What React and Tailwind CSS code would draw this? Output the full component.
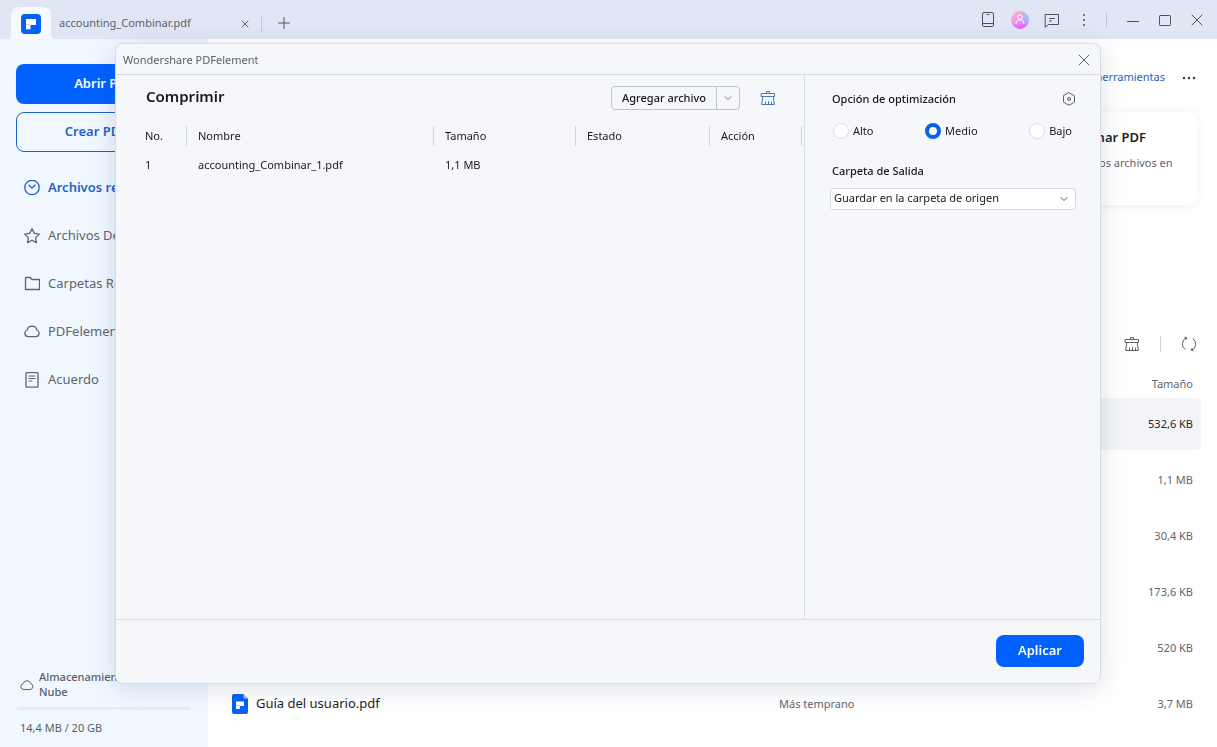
import { useState } from "react";

const navItems = [
  { label: "Archivos recientes", icon: ClockIcon, active: true },
  { label: "Archivos Destacados", icon: StarIcon },
  { label: "Carpetas Recientes", icon: FolderIcon },
  { label: "PDFelement Cloud", icon: CloudIcon },
  { label: "Acuerdo", icon: AgreementIcon },
];

const recentFiles = [
  { size: "532,6 KB", selected: true },
  { size: "1,1 MB" },
  { size: "30,4 KB" },
  { size: "173,6 KB" },
  { size: "520 KB" },
  { name: "Guía del usuario.pdf", date: "Más temprano", size: "3,7 MB" },
];

const compressFiles = [{ name: "accounting_Combinar_1.pdf", size: "1,1 MB" }];

const levels = ["Alto", "Medio", "Bajo"];

function Icon({ size = 16, width = 1, children }) {
  return (
    <svg
      width={size}
      height={size}
      viewBox={`0 0 ${size} ${size}`}
      fill="none"
      stroke="currentColor"
      strokeWidth={width}
      strokeLinecap="round"
      strokeLinejoin="round"
      className="shrink-0"
      aria-hidden="true"
    >
      {children}
    </svg>
  );
}

function ClockIcon() {
  return (
    <Icon width={1.3}>
      <circle cx="8" cy="7.5" r="7.2" />
      <path d="M5 5.2 8 8l3.2-2.9" />
    </Icon>
  );
}

function StarIcon() {
  return (
    <Icon width={1.3}>
      <path d="m8 .7 2.300 4.700 5 .7-3.700 3.500.9 5L8 12.200l-4.500 2.400.9-5L.7 6.100l5-.7z" />
    </Icon>
  );
}

function FolderIcon() {
  return (
    <Icon width={1.3}>
      <path d="M1.500 13.500v-12h4.700l1.800 2h7.500v10z" />
    </Icon>
  );
}

function CloudIcon() {
  return (
    <Icon width={1.3}>
      <path d="M4 12.600a3.400 3.400 0 0 1-.8-6.600 4.900 4.900 0 0 1 9.600 0 3.400 3.400 0 0 1-.8 6.600z" />
    </Icon>
  );
}

function AgreementIcon() {
  return (
    <Icon width={1.3}>
      <rect x="2" y=".7" width="12" height="14.5" rx="1" />
      <path d="M5 4h6M5 6.500h6M5 9h3" strokeWidth="1.1" />
    </Icon>
  );
}

function CloseIcon({ size = 12 }) {
  return (
    <Icon size={size}>
      <path d={`M1 1 ${size - 1} ${size - 1}M${size - 1} 1 1 ${size - 1}`} />
    </Icon>
  );
}

function BroomIcon() {
  return (
    <Icon>
      <path d="M6.500 3.500v-2h3v2M1.500 3.500h13v3h-13zM2.700 6.500l-1 8h12.600l-1-8M5.500 14.500v-2.500M8.500 14.500v-3M11.500 14.500v-2.500" />
    </Icon>
  );
}

function ChevronDown() {
  return (
    <Icon size={8}>
      <path d="m.8 2.500 3.200 3 3.200-3" />
    </Icon>
  );
}

function Logo() {
  return (
    <svg width="20" height="20" viewBox="0 0 20 20" aria-hidden="true">
      <rect width="20" height="20" rx="4" fill="#0561f5" />
      <path d="M5 5h10v6H5z" fill="#fff" />
      <path d="M5 11h4.500v4.300H5z" fill="#fff" />
      <path d="M5 10.300h4.500v.9H5z" fill="#a9c9fd" />
    </svg>
  );
}

function PdfIcon() {
  return (
    <svg width="16" height="20" viewBox="0 0 16 20" className="shrink-0" aria-hidden="true">
      <path d="M2 0h9.500L16 4.500V18a2 2 0 0 1-2 2H2a2 2 0 0 1-2-2V2a2 2 0 0 1 2-2z" fill="#0561f5" />
      <path d="M11.500 0 16 4.500h-3.500a1 1 0 0 1-1-1z" fill="#a9c8ff" />
      <path d="M4 7.500h8V12H4z" fill="#fff" />
      <path d="M4 12h3.800v3H4z" fill="#fff" />
      <path d="M4 11.200h3.800v.8H4z" fill="#a9c9fd" />
    </svg>
  );
}

function BarButton({ label, children }) {
  return (
    <button aria-label={label} className="flex size-8 items-center justify-center">
      {children}
    </button>
  );
}

function TitleBar() {
  return (
    <header className="flex h-[39px] shrink-0 items-center bg-[#e1e6f5] pr-1 text-[#4d525c]">
      <button aria-label="Inicio" className="relative ml-[11px] flex w-10 items-center justify-center self-end rounded-t-lg bg-[#f6f9fe] pt-[7px] pb-[5px]">
        <Logo />
        <svg width="48" height="6" viewBox="0 0 48 6" className="absolute bottom-0 -left-1 fill-[#f6f9fe]" aria-hidden="true">
          <path d="M0 6q4 0 4-6v6zM48 6q-4 0-4-6v6z" />
        </svg>
      </button>
      <div className="mt-2 ml-2 flex h-4 w-[203px] items-center justify-between border-r border-[#c3c8d6] pr-3 text-[11px] text-[#5c6069]">
        <span>accounting_Combinar.pdf</span>
        <button aria-label="Cerrar pestaña">
          <CloseIcon size={8} />
        </button>
      </div>
      <button aria-label="Nueva pestaña" className="mt-1.5 ml-4">
        <Icon size={12}>
          <path d="M6 .5v11M.5 6h11" />
        </Icon>
      </button>

      <div className="ml-auto flex items-center">
        <BarButton label="Dispositivo">
          <Icon>
            <rect x="2.5" y=".5" width="11" height="14" rx="1.5" />
            <path d="M2.500 11.500h11M7 2.500h2" />
          </Icon>
        </BarButton>
        <BarButton label="Cuenta">
          <svg width="18" height="18" viewBox="0 0 18 18" fill="none" aria-hidden="true">
            <defs>
              <linearGradient id="avatar" x1="5" y1="1" x2="12" y2="17" gradientUnits="userSpaceOnUse">
                <stop stopColor="#ffb0b8" />
                <stop offset=".5" stopColor="#ef96ee" />
                <stop offset="1" stopColor="#e05cff" />
              </linearGradient>
              <linearGradient id="glow" x1="18" y1="6" x2="10" y2="8" gradientUnits="userSpaceOnUse">
                <stop stopColor="#7fd0ff" />
                <stop offset="1" stopColor="#7fd0ff" stopOpacity="0" />
              </linearGradient>
            </defs>
            <circle cx="9" cy="9" r="9" fill="url(#avatar)" />
            <circle cx="9" cy="9" r="9" fill="url(#glow)" />
            <circle cx="9" cy="6.2" r="2.3" stroke="#fff" />
            <path d="M5 12.500c0-5 8-5 8 0" stroke="#fff" strokeLinecap="round" />
          </svg>
        </BarButton>
        <BarButton label="Comentarios">
          <Icon>
            <path d="M1.500 2.500h13v10h-10l-3 2.500zM5.500 6.500h5M5.500 9h2" />
          </Icon>
        </BarButton>
        <BarButton label="Más">
          <Icon>
            <g fill="currentColor" stroke="none">
              <circle cx="8" cy="3" r="1" />
              <circle cx="8" cy="8" r="1" />
              <circle cx="8" cy="13" r="1" />
            </g>
          </Icon>
        </BarButton>
        <span className="mr-2.5 ml-1.5 h-4 w-px bg-[#c0c5d2]" />
        <BarButton label="Minimizar">
          <Icon size={12}>
            <path d="M0 7.500h12" />
          </Icon>
        </BarButton>
        <BarButton label="Maximizar">
          <Icon size={12}>
            <rect x=".5" y="1.5" width="11" height="10" rx=".8" />
          </Icon>
        </BarButton>
        <BarButton label="Cerrar">
          <CloseIcon />
        </BarButton>
      </div>
    </header>
  );
}

function Sidebar() {
  return (
    <aside className="flex w-52 shrink-0 flex-col bg-[#f0f7ff] px-4 pt-[25px] pb-[11px]">
      <div className="flex flex-col gap-2">
        <button className="h-10 rounded-lg bg-[#0061ff] text-[13px] font-semibold text-white">Abrir PDF</button>
        <button className="flex h-10 items-center justify-center gap-2 rounded-lg border border-[#1f62c4] text-[13px] font-semibold text-[#1f62c4]">
          Crear PDF
          <ChevronDown />
        </button>
      </div>
      <nav className="mt-3 flex flex-col">
        {navItems.map(({ label, icon: NavIcon, active }) => (
          <a
            key={label}
            href="#"
            className={`flex h-12 items-center gap-2 pl-2 text-[13px] whitespace-nowrap ${
              active ? "font-semibold text-[#1f62c4]" : "text-[#60656d]"
            }`}
          >
            <NavIcon />
            {label}
          </a>
        ))}
      </nav>
      <div className="mt-auto text-[11px] text-[#5c6067]">
        <div className="flex items-center gap-1 pl-1">
          <Icon size={14}>
            <path d="M3.500 12.500a2.900 2.900 0 0 1-.5-5.700 4.100 4.100 0 0 1 7.900-.1 3 3 0 0 1-.4 5.800z" />
          </Icon>
          <span className="pl-px leading-[15px] font-medium">
            Almacenamiento en la
            <br />
            Nube
          </span>
        </div>
        <div className="mt-2 mr-0.5 ml-px h-[3px] rounded-full bg-[#e9edf2]" />
        <p className="mt-2.5 pl-1 leading-4">14,4 MB / 20 GB</p>
      </div>
    </aside>
  );
}

function Home() {
  return (
    <main className="flex min-w-0 flex-1 flex-col bg-white px-4">
      <div className="flex h-[73px] items-center justify-end gap-4 pt-1 pr-1">
        <a href="#" className="text-[11px] text-[#1f62c4]">
          Todas las herramientas
        </a>
        <button aria-label="Más opciones" className="text-[#33363c]">
          <Icon>
            <g fill="currentColor" stroke="none">
              <circle cx="3" cy="8" r="1.2" />
              <circle cx="8" cy="8" r="1.2" />
              <circle cx="13" cy="8" r="1.2" />
            </g>
          </Icon>
        </button>
      </div>
      <section className="mr-1 ml-auto h-[93px] w-[220px] rounded-lg bg-white pt-[15px] pl-[79px] shadow-[0_1px_10px_rgba(30,50,90,0.08)]">
        <h3 className="text-[13px] leading-5 font-semibold text-[#1d1f24]">Combinar PDF</h3>
        <p className="mt-2 text-[11px] whitespace-nowrap text-[#62666d]">Une varios archivos en</p>
      </section>

      <div className="mt-[123px] flex h-8 items-center justify-end gap-5 pr-1 text-[#5d6167]">
        <button aria-label="Limpiar lista">
          <BroomIcon />
        </button>
        <span className="h-4 w-px bg-[#d5d7dc]" />
        <button aria-label="Actualizar">
          <Icon>
            <path d="M5.500 1.800a6.700 6.700 0 0 0-1.500 11.600M10.500 14.200A6.700 6.700 0 0 0 12 2.600M3.800 1.300l1.900.4-.7 1.800M12.200 14.700l-1.900-.4.7-1.800" />
          </Icon>
        </button>
      </div>
      <table className="-mt-0.5 w-full table-fixed border-separate border-spacing-x-0 border-spacing-y-1 text-left text-[11px] text-[#62666d]">
        <thead>
          <tr className="h-8">
            <th aria-label="Nombre" />
            <th aria-label="Fecha" className="w-[200px]" />
            <th className="w-[222px] pt-3 pr-2 text-right font-normal">Tamaño</th>
          </tr>
        </thead>
        <tbody>
          {recentFiles.map((file) => (
            <tr key={file.size} className={`h-[52px] ${file.selected ? "bg-[#f3f4f7] text-[#1d1f24]" : ""}`}>
              <td className="rounded-l pl-2">
                {file.name && (
                  <span className="flex items-center gap-2 text-[13px] text-[#1d1f24]">
                    <PdfIcon />
                    {file.name}
                  </span>
                )}
              </td>
              <td>{file.date}</td>
              <td className="rounded-r pr-2 text-right">{file.size}</td>
            </tr>
          ))}
        </tbody>
      </table>
    </main>
  );
}

function HeadCell({ children, className = "" }) {
  return (
    <th className={`p-0 font-normal ${className}`}>
      <span className="flex h-5 items-center border-r border-[#cfd2d9] pl-[11px]">{children}</span>
    </th>
  );
}

function CompressDialog() {
  const [level, setLevel] = useState("Medio");

  return (
    <div className="fixed inset-0 flex pt-[43px] pr-[116px] pb-[63px] pl-[115px]">
      <div
        role="dialog"
        aria-label="Wondershare PDFelement"
        className="flex min-w-0 flex-1 flex-col rounded-lg border border-[#d9dce3] bg-[#f5f7fb] text-[11px] text-[#17191d] shadow-[0_4px_24px_rgba(40,60,110,0.16)]"
      >
        <div className="flex h-[31px] shrink-0 items-center justify-between border-b border-[#d9dce3] pt-0.5 pr-2.5 pl-[7px] text-[#5c6067]">
          <span>Wondershare PDFelement</span>
          <button aria-label="Cerrar">
            <CloseIcon />
          </button>
        </div>

        <div className="flex min-h-0 flex-1">
          <section className="min-w-0 flex-1">
            <div className="flex h-11 items-center pt-0.5 pl-[30px]">
              <h2 className="pb-1 text-[15px] font-semibold">Comprimir</h2>
              <div className="ml-auto flex h-6 rounded border border-[#bfc3cc] font-medium">
                <button className="border-r border-[#bfc3cc] px-2.5">Agregar archivo</button>
                <button aria-label="Más opciones de archivo" className="flex w-[22px] items-center justify-center text-[#8b8f98]">
                  <ChevronDown />
                </button>
              </div>
              <button aria-label="Vaciar lista" className="mr-7 ml-5 text-[#3f7cc4]">
                <BroomIcon />
              </button>
            </div>
            <div className="mt-[7px] pr-0.5 pl-[18px]">
              <table className="w-full table-fixed text-left">
                <thead>
                  <tr>
                    <HeadCell className="w-[53px]">No.</HeadCell>
                    <HeadCell>Nombre</HeadCell>
                    <HeadCell className="w-[142px]">Tamaño</HeadCell>
                    <HeadCell className="w-[134px]">Estado</HeadCell>
                    <HeadCell className="w-[92px]">Acción</HeadCell>
                  </tr>
                </thead>
                <tbody>
                  {compressFiles.map((file, index) => (
                    <tr key={file.name} className="h-[38px]">
                      <td className="pl-[11px]">{index + 1}</td>
                      <td className="pl-[11px]">{file.name}</td>
                      <td className="pl-[11px]">{file.size}</td>
                      <td />
                      <td />
                    </tr>
                  ))}
                </tbody>
              </table>
            </div>
          </section>

          <section className="w-[296px] shrink-0 border-l border-[#d9dce3] pt-4 pr-7 pl-[27px]">
            <div className="-mr-1 flex items-center justify-between">
              <h3 className="font-medium">Opción de optimización</h3>
              <button aria-label="Ajustes" className="text-[#5c6067]">
                <Icon size={14}>
                  <path d="m7 .7 5.500 3.200v6.200L7 13.300l-5.500-3.200V3.900z" />
                  <circle cx="7" cy="7" r="1.5" />
                </Icon>
              </button>
            </div>
            <div className="mt-[15px] flex items-center justify-between pl-px">
              {levels.map((name) => (
                <label key={name} className="flex items-center gap-1">
                  <input
                    type="radio"
                    name="level"
                    value={name}
                    checked={level === name}
                    onChange={() => setLevel(name)}
                    className="size-4 appearance-none rounded-full border border-[#dcdfe5] bg-white checked:border-4 checked:border-[#0561f0]"
                  />
                  {name}
                </label>
              ))}
            </div>
            <label htmlFor="output" className="mt-6 block font-medium">
              Carpeta de Salida
            </label>
            <div className="relative -mr-1 -ml-0.5 mt-2">
              <select id="output" className="block h-[22px] w-full appearance-none rounded border border-[#d5d8df] bg-white pl-[3px]">
                <option>Guardar en la carpeta de origen</option>
              </select>
              <span className="pointer-events-none absolute inset-y-0 right-2 flex items-center text-[#5c6067]">
                <ChevronDown />
              </span>
            </div>
          </section>
        </div>

        <div className="flex h-16 shrink-0 items-center justify-end border-t border-[#d9dce3] pr-4 pb-px">
          <button className="h-8 w-[88px] rounded-lg bg-[#0061ff] text-[13px] font-semibold text-white">Aplicar</button>
        </div>
      </div>
    </div>
  );
}

const App = () => {
  return (
    <div className="flex min-h-screen flex-col font-['Noto_Sans','Open_Sans',sans-serif]">
      <TitleBar />
      <div className="flex flex-1">
        <Sidebar />
        <Home />
      </div>
      <CompressDialog />
    </div>
  );
};

export default App;
